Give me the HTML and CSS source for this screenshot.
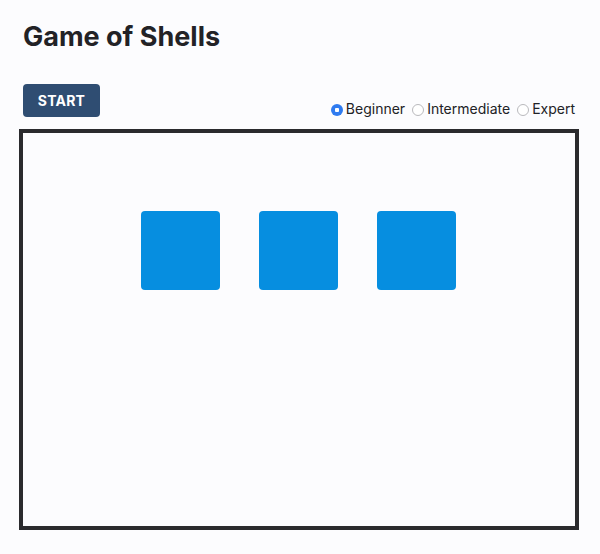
FILE: index.html
```html
<!DOCTYPE html>
<html>
<head>
<meta charset="utf-8">
<link rel="stylesheet" href="styles.css">
</head>
<body>
<div class="app">
  <h1 class="title">Game of Shells</h1>
  <div class="controls">
    <button class="start">START</button>
    <div class="levels">
      <label class="level"><span class="radio checked"></span>Beginner</label>
      <label class="level"><span class="radio"></span>Intermediate</label>
      <label class="level"><span class="radio"></span>Expert</label>
    </div>
  </div>
  <div class="board">
    <div class="shells">
      <div class="shell"></div>
      <div class="shell"></div>
      <div class="shell"></div>
    </div>
  </div>
</div>
</body>
</html>
```
FILE: styles.css
```css
html, body {
  margin: 0;
  padding: 0;
  background: #fcfcfe;
}
body {
  font-family: Inter, "Noto Sans", sans-serif;
  color: #222226;
}
.app {
  width: 560px;
  padding: 20px 0 0 19px;
}
.title {
  margin: 0 0 0 4px;
  font-size: 27px;
  line-height: 34px;
  font-weight: 700;
}
.controls {
  display: flex;
  justify-content: space-between;
  align-items: flex-end;
  margin-top: 30px;
  padding: 0 4px;
}
.start {
  width: 77px;
  height: 33px;
  border: none;
  border-radius: 4px;
  background: #2f4d72;
  color: #fff;
  font-family: Inter, sans-serif;
  font-weight: 700;
  font-size: 14px;
  letter-spacing: 0.2px;
  padding: 0;
}
.levels {
  display: flex;
  gap: 7px;
  margin-bottom: -1px;
}
.level {
  display: flex;
  align-items: center;
  font-size: 14px;
  line-height: 18px;
  color: #222226;
}
.radio {
  width: 12px;
  height: 12px;
  border-radius: 50%;
  border: 1px solid #b9b9bd;
  box-sizing: border-box;
  margin-right: 3px;
  margin-top: 2px;
  background: #fff;
}
.radio.checked {
  border: none;
  background: radial-gradient(circle, #fff 0 2px, #2f7bf0 2.5px);
}
.board {
  margin-top: 12px;
  width: 560px;
  height: 401px;
  box-sizing: border-box;
  border: 4px solid #2a2a2d;
  display: flex;
  justify-content: center;
  align-items: flex-start;
}
.shells {
  display: flex;
  gap: 39px;
  margin: 78px 2px 0 0;
}
.shell {
  width: 79px;
  height: 79px;
  border-radius: 4px;
  background: #068ee0;
}
```
